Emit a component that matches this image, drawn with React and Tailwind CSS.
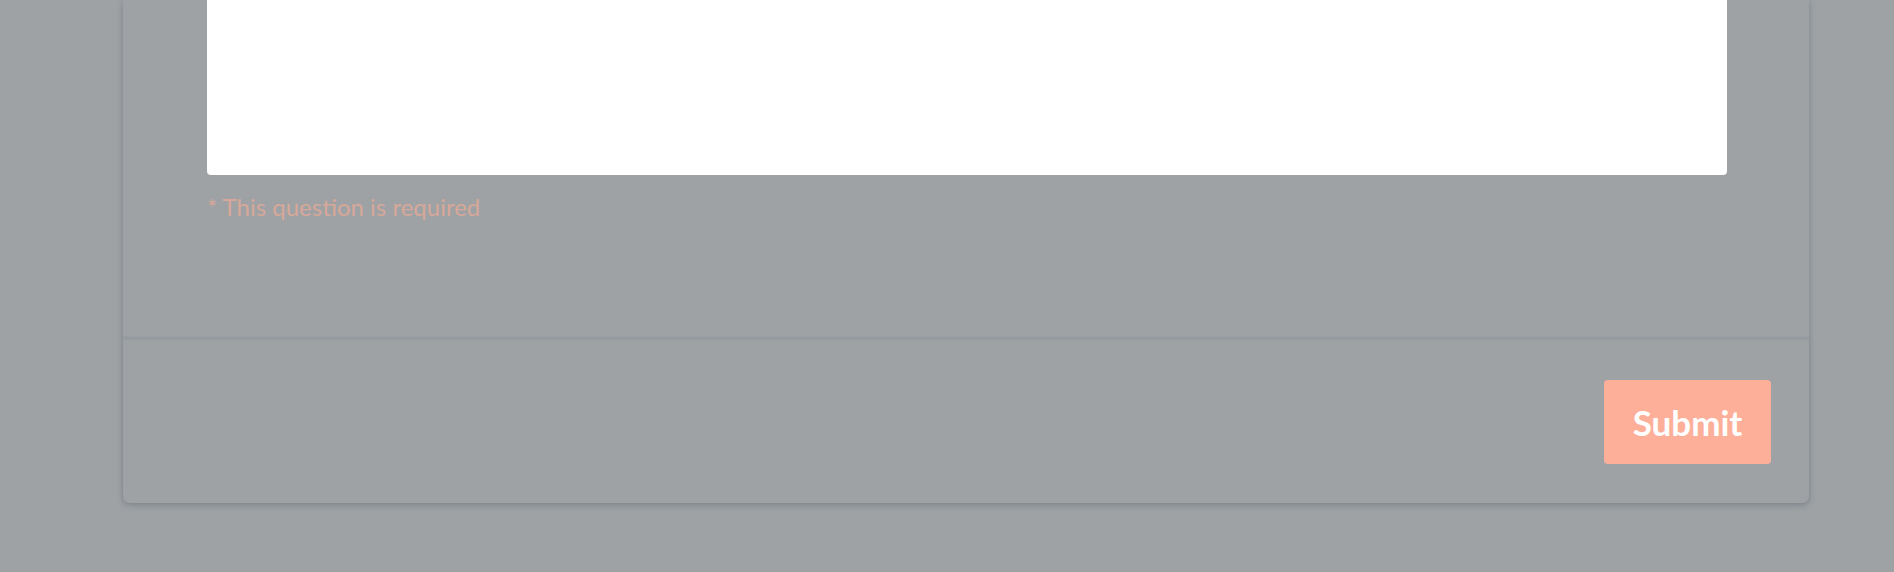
import React, { useState } from "react";

const App = () => {
  const [answer, setAnswer] = useState("");

  return (
    <div
      className="min-h-[572px] w-full bg-[#9ea2a5] overflow-hidden"
      style={{ fontFamily: "Lato, 'Noto Sans', 'Open Sans', sans-serif" }}
    >
      <div className="ml-[123px] w-[1686px] bg-[#9ea2a5] rounded-b-[7px] shadow-[0_2px_6px_rgba(70,74,90,0.35)]">
        {/* Question body */}
        <div className="pl-[84px] pr-[82px] pb-[116px]">
          <textarea
            value={answer}
            onChange={(e) => setAnswer(e.target.value)}
            className="block w-full h-[175px] bg-white rounded-b-[4px] resize-none outline-none p-4"
          />
          <p className="mt-[17px] text-[24px] leading-[30px] text-[#d7a899]">
            * This question is required
          </p>
        </div>

        {/* Footer */}
        <div className="border-t-2 border-[#969aa1] shadow-[0_-1px_2px_rgba(110,114,130,0.25)] flex justify-end pt-[40px] pb-[39px] pr-[38px]">
          <button
            type="button"
            className="w-[167px] h-[84px] rounded-[4px] bg-[#fdaf9a] text-white font-bold text-[35px]"
          >
            Submit
          </button>
        </div>
      </div>
    </div>
  );
};

export default App;
